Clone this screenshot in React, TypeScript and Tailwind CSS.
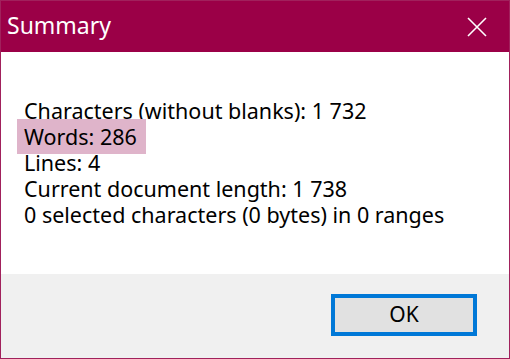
import React from 'react';

const lines = [
  'Characters (without blanks): 1 732',
  'Words: 286',
  'Lines: 4',
  'Current document length: 1 738',
  '0 selected characters (0 bytes) in 0 ranges',
];

export default function App() {
  return (
    <div className="w-[510px] h-[359px] flex flex-col border border-[#a1215c] bg-white text-black" style={{ fontFamily: '"Noto Sans", "Open Sans", sans-serif' }}>
      {/* title bar */}
      <div className="h-[51px] shrink-0 flex items-center justify-between bg-[#9b0047] pl-[6px] pr-[22px]">
        <span className="text-[23px] leading-none text-white pb-[2px]">Summary</span>
        <svg width="20" height="20" viewBox="0 0 20 20" className="text-white">
          <path d="M1 1L19 19M19 1L1 19" stroke="currentColor" strokeWidth="1.6" />
        </svg>
      </div>

      {/* content */}
      <div className="flex-1 pt-[46px] pl-[23px] text-[21.5px] leading-[26px]">
        {lines.map((line, i) => (
          <div key={i} className="h-[26px] whitespace-nowrap">
            {i === 1 ? (
              <span className="bg-[#dfb4ca] -ml-[7px] pl-[7px] pr-[9px] py-[3px]">{line}</span>
            ) : (
              line
            )}
          </div>
        ))}
      </div>

      {/* footer */}
      <div className="h-[84px] shrink-0 bg-[#f0f0f0] flex justify-end items-start pt-[20px] pr-[32px]">
        <button className="w-[146px] h-[42px] border-4 border-[#0078d7] bg-[#e1e1e1] text-[21px] text-black">
          OK
        </button>
      </div>
    </div>
  );
}
